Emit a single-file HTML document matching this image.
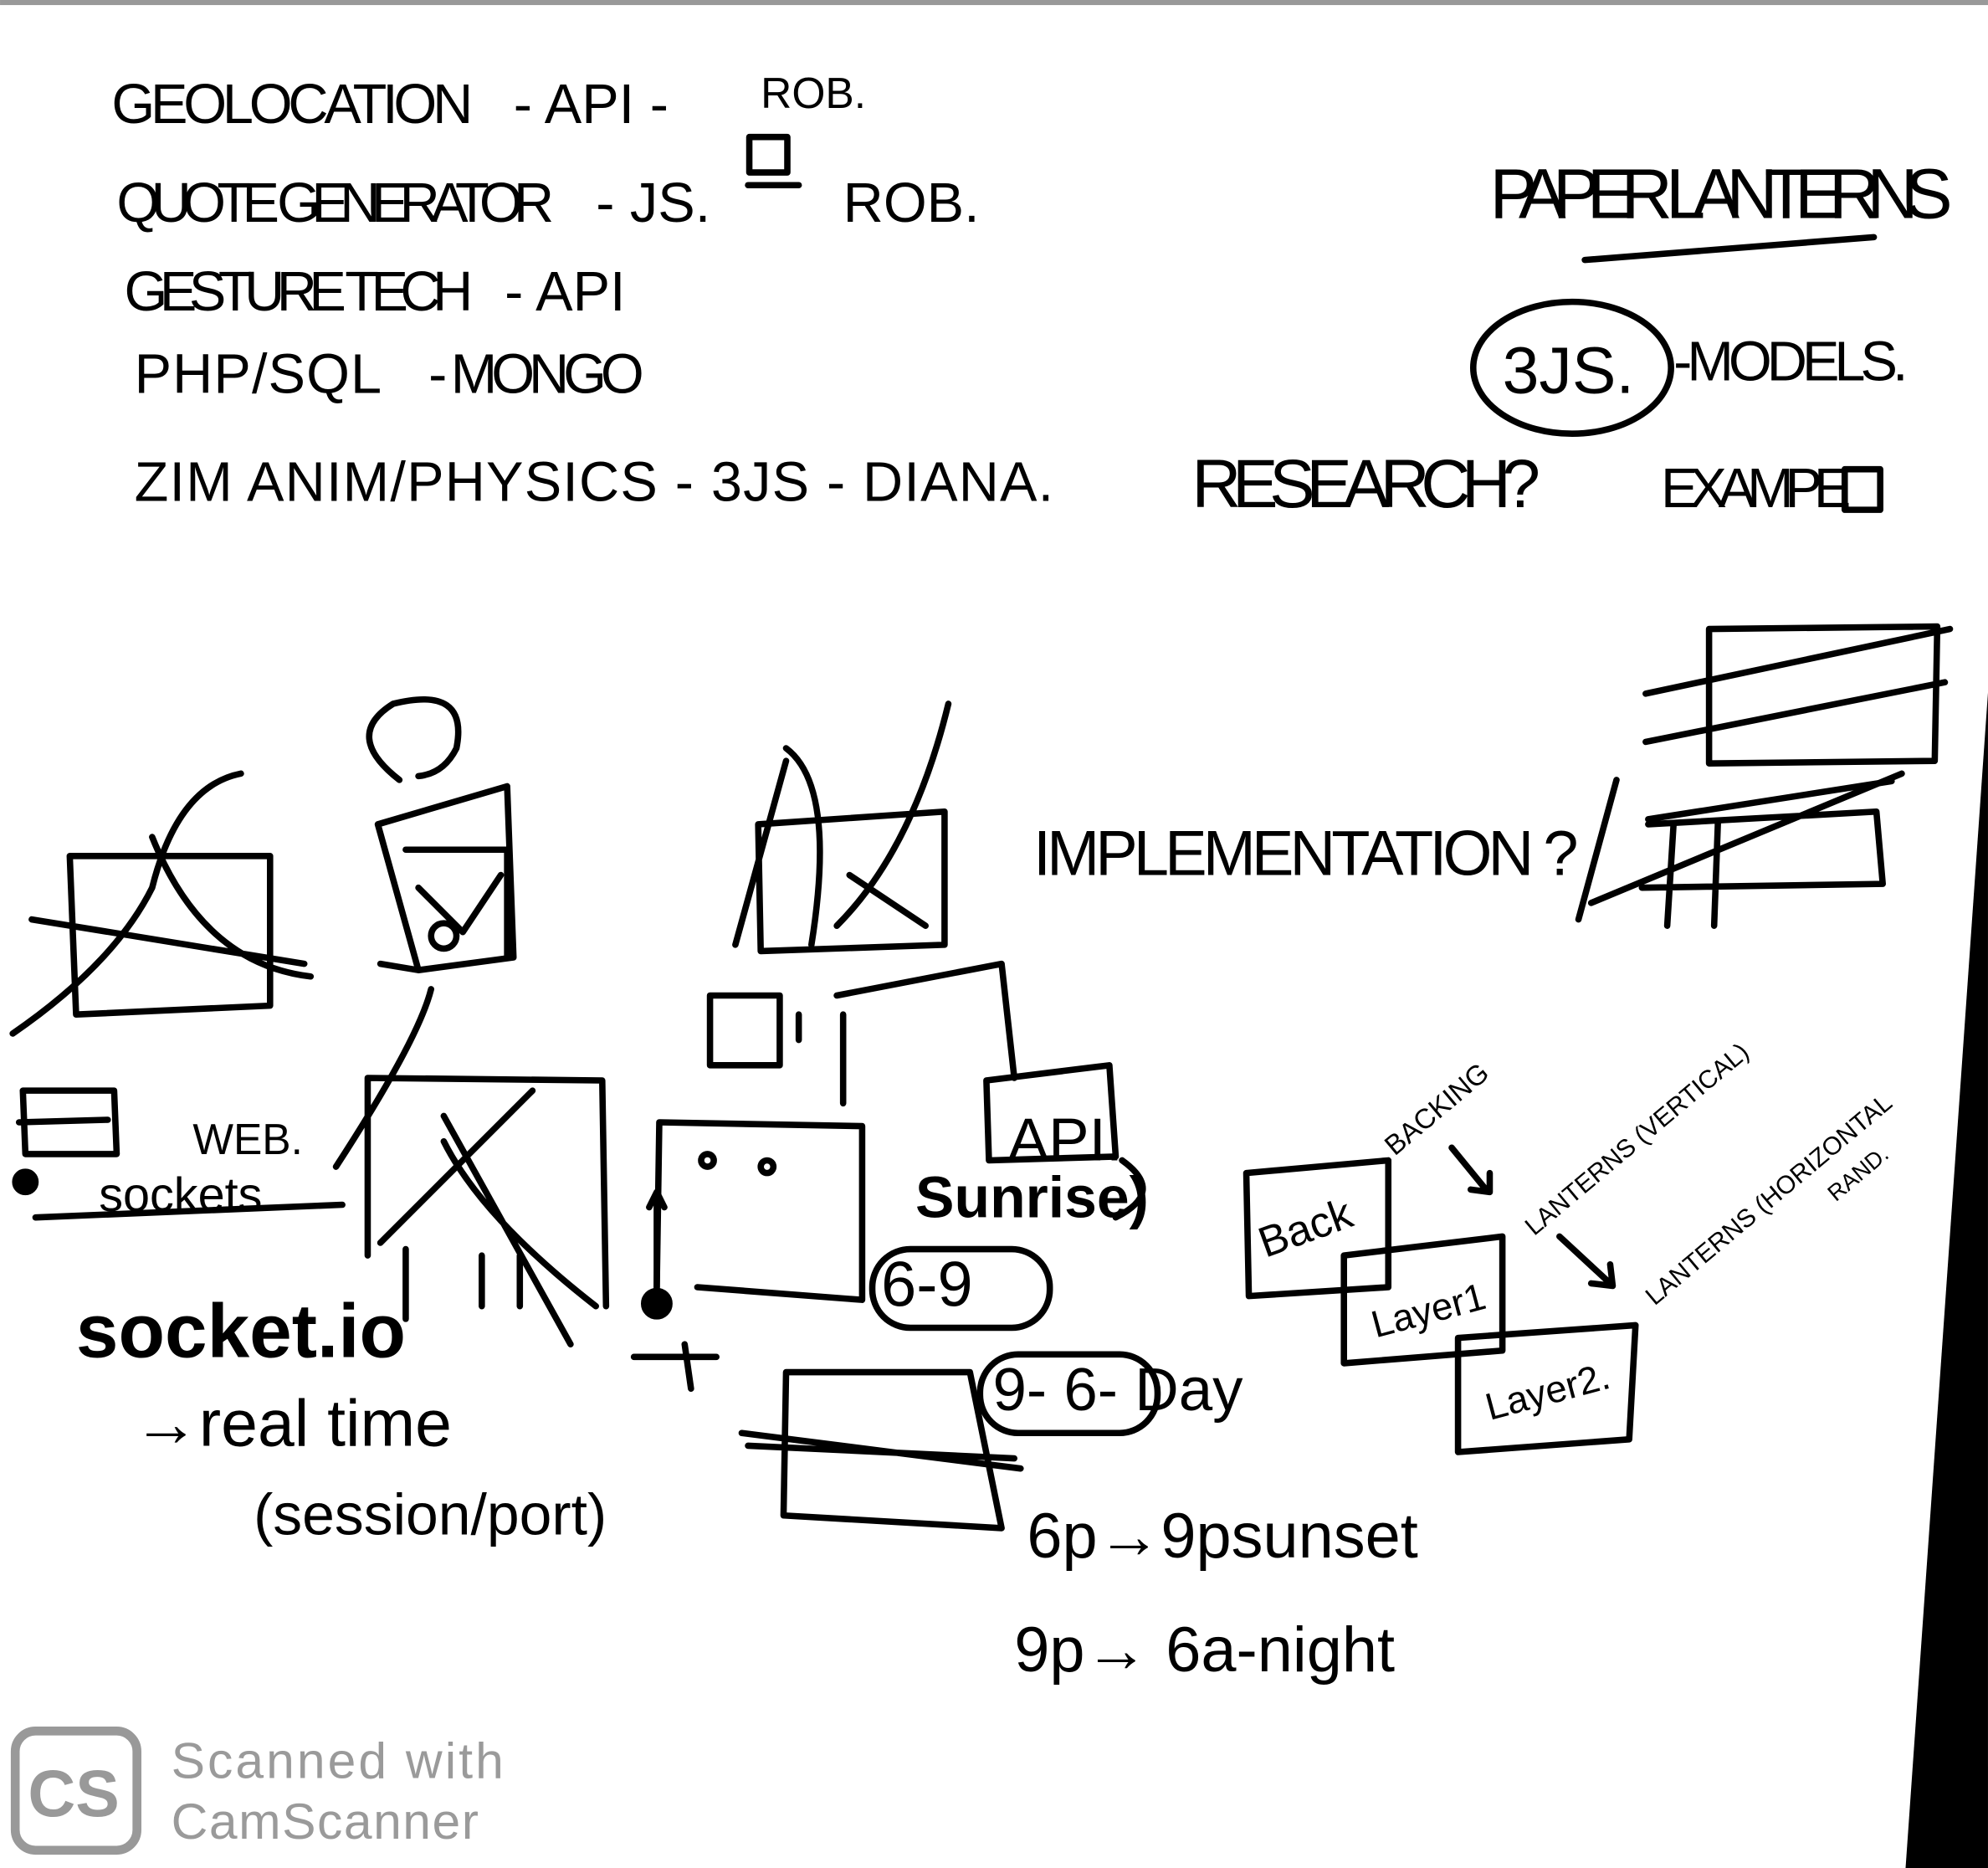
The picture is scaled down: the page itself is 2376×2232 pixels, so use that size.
<!DOCTYPE html>
<html><head><meta charset="utf-8"><style>
html,body{margin:0;padding:0;background:#fff}
svg{display:block}
text{font-family:"Liberation Sans",sans-serif;fill:#000}
</style></head><body>
<svg width="2376" height="2232" viewBox="0 0 1568 1473" xmlns="http://www.w3.org/2000/svg">
<rect width="1568" height="1473" fill="#fff"/>
<rect x="0" y="0" width="1568" height="4" fill="#999"/>
<polygon points="1568,546 1568,1473 1503,1473" fill="#000"/>
<g font-family="Liberation Sans Narrow, Liberation Sans, sans-serif" font-size="44" style="font-stretch:condensed">
<text x="88" y="97" textLength="285">GEOLOCATION</text>
<text x="405" y="97">- API - </text><text x="600" y="85" font-size="34">ROB.</text>
<text x="92" y="175" textLength="345">QUOTE GENERATOR</text>
<text x="470" y="175">- JS.</text><text x="665" y="175">ROB.</text>
<text x="98" y="245" textLength="275">GESTURE TECH</text><text x="398" y="245">- API</text>
<text x="106" y="310" textLength="195">PHP/SQL</text><text x="338" y="310" textLength="170">- MONGO</text>
<text x="106" y="395" textLength="725">ZIM  ANIM/PHYSICS  - 3JS - DIANA.</text>
<text x="940" y="400" font-size="54" textLength="275">RESEARCH?</text>
<text x="1310" y="400" textLength="150">EXAMPE</text>
<text x="1175" y="172" font-size="56" textLength="365">PAPER LANTERNS</text>
<text x="1185" y="310" font-size="52">3JS.</text>
<text x="1320" y="300" textLength="185">-MODELS.</text>
<text x="815" y="690" font-size="50" textLength="430">IMPLEMENTATION ?</text>
<text x="152" y="910" font-size="34">WEB.</text>
<text x="78" y="955" font-size="38">sockets</text>
<text x="60" y="1070" font-size="60" font-weight="bold">socket.io</text>
<text x="105" y="1140" font-size="52">→real time</text>
<text x="200" y="1210" font-size="46">(session/port)</text>
<text x="795" y="915" font-size="48">API.</text>
<text x="722" y="960" font-size="46" font-weight="bold">Sunrise)</text>
<text x="695" y="1030" font-size="50">6-9</text>
<text x="783" y="1112" font-size="48">9- 6- Day</text>
<text x="810" y="1228" font-size="50">6p→9psunset</text>
<text x="800" y="1318" font-size="50">9p→ 6a-night</text>
<text x="998" y="992" font-size="34" transform="rotate(-20 998 992)">Back</text>
<text x="1085" y="1055" font-size="30" transform="rotate(-15 1085 1055)">Layer1</text>
<text x="1175" y="1120" font-size="30" transform="rotate(-15 1175 1120)">Layer2.</text>
<text x="1100" y="912" font-size="22" transform="rotate(-40 1100 912)">BACKING</text>
<text x="1210" y="975" font-size="20" transform="rotate(-40 1210 975)">LANTERNS (VERTICAL)</text>
<text x="1305" y="1030" font-size="20" transform="rotate(-40 1305 1030)">LANTERNS (HORIZONTAL</text>
<text x="1448" y="948" font-size="18" transform="rotate(-40 1448 948)">RAND.</text>
</g>
<g fill="none" stroke="#000" stroke-width="5" stroke-linecap="round" stroke-linejoin="round">
<path d="M1250 205 L1478 187"/>
<ellipse cx="1240" cy="290" rx="78" ry="52"/>
<rect x="591" y="108" width="30" height="28"/><path d="M590 146 L630 146"/>
<rect x="1455" y="370" width="28" height="32"/>
<path d="M1348 496 L1528 494 L1526 600 L1348 602 Z M1298 547 L1538 496 M1298 585 L1534 538 M1300 646 L1492 616"/>
<path d="M1245 725 L1275 615 M1255 712 L1500 610 M1295 700 L1485 697 L1480 640 L1300 650 M1320 650 L1315 730 M1355 648 L1352 730"/>
<path d="M55 675 L213 675 L213 793 L60 800 Z M25 725 L240 760 M10 815 Q90 760 120 700 Q140 620 190 610 M120 660 Q160 760 245 770"/>
<path d="M18 860 L90 860 L92 910 L20 910 Z M15 885 L85 883"/>
<circle cx="20" cy="932" r="8" fill="#000"/>
<path d="M28 960 L270 950"/>
<path d="M298 650 L400 620 L405 755 L330 765 Z M300 760 L330 765 M320 670 L400 670 L400 755 M330 700 L365 735 L395 690"/>
<path d="M315 615 Q270 580 310 555 Q370 540 360 590 Q350 610 330 612"/>
<circle cx="350" cy="738" r="10"/>
<path d="M290 850 L475 852 L478 1030 M290 850 L290 990 M265 920 Q330 820 340 780 M300 980 L420 860 M350 900 Q380 960 470 1030 M350 880 L450 1060 M320 985 L320 1040 M380 990 L380 1030 M410 990 L410 1030"/>
<path d="M598 650 L745 640 L745 745 L600 750 Z M580 745 L620 600 M640 745 Q660 620 620 590 M670 690 L730 730 M660 730 Q720 670 748 555"/>
<path d="M560 785 L615 785 L615 840 L560 840 Z M660 785 L790 760 L800 850 M665 800 L665 870 M630 800 L630 820"/>
<path d="M520 885 L680 888 L680 1025 L550 1015 M520 885 L518 1015"/>
<circle cx="558" cy="915" r="5"/><circle cx="605" cy="920" r="5"/>
<path d="M518 1025 L518 940 M512 952 L518 940 L524 952"/>
<circle cx="518" cy="1028" r="10" fill="#000"/>
<path d="M500 1070 L565 1070 M540 1060 L545 1095"/>
<path d="M778 852 L875 840 L880 912 L780 915 Z"/>
<path d="M885 915 Q920 940 880 960"/>
<rect x="688" y="985" width="140" height="62" rx="30"/>
<rect x="773" y="1068" width="140" height="62" rx="30"/>
<path d="M620 1082 L765 1082 L790 1205 L618 1195 Z M585 1130 L805 1158 M590 1140 L800 1150"/>
<path d="M983 925 L1095 915 L1095 1015 L985 1022 Z"/>
<path d="M1060 990 L1185 975 L1185 1065 L1060 1075 Z"/>
<path d="M1150 1055 L1290 1045 L1285 1135 L1150 1145 Z"/>
<path d="M1145 905 L1172 938 M1160 938 L1175 940 L1175 925"/>
<path d="M1230 975 L1270 1012 M1255 1012 L1272 1014 L1270 997"/>
</g>
<g>
<rect x="12" y="1365" width="96" height="94" rx="16" fill="none" stroke="#999" stroke-width="7"/>
<text x="22" y="1432" font-size="52" font-weight="bold" fill="#999" style="fill:#999">CS</text>
<text x="135" y="1402" font-size="40" style="fill:#9a9a9a;letter-spacing:2px">Scanned with</text>
<text x="135" y="1450" font-size="40" style="fill:#9a9a9a;letter-spacing:1px">CamScanner</text>
</g>
</svg>
</body></html>
